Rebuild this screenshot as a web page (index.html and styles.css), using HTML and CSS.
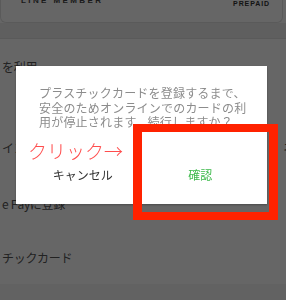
FILE: index.html
```html
<!DOCTYPE html>
<html lang="ja">
<head>
<meta charset="utf-8">
<title>カード登録確認</title>
<link rel="stylesheet" href="styles.css">
</head>
<body>
<div class="screen">
  <div class="card">
    <span class="member">LINE MEMBER</span>
    <span class="prepaid">PREPAID</span>
  </div>
  <div class="band"></div>
  <div class="row r1"><span class="label">を利用</span></div>
  <div class="row r2"><span class="label">イン</span><span class="edge">ネ</span></div>
  <div class="row r3"><span class="label">e Payに登録</span></div>
  <div class="row r4"><span class="label">チックカード</span></div>
  <div class="footer"></div>
</div>
<div class="overlay"></div>
<div class="dialog">
  <p class="msg">プラスチックカードを登録するまで、<br>安全のためオンラインでのカードの利<br>用が停止されます。続行しますか？</p>
  <div class="actions">
    <button class="btn cancel">キャンセル</button>
    <button class="btn ok">確認</button>
  </div>
  <span class="note">クリック→</span>
</div>
<div class="highlight"></div>
</body>
</html>
```
FILE: styles.css
```css
html, body {
  margin: 0;
  padding: 0;
}
body {
  width: 286px;
  height: 300px;
  overflow: hidden;
  background: #fff;
  font-family: "Noto Sans CJK JP", "Noto Sans", sans-serif;
}
.screen {
  height: 300px;
  display: flex;
  flex-direction: column;
}
.card {
  flex: none;
  height: 23px;
  margin-right: 3px;
  box-sizing: border-box;
  border: 1px solid #e2e2e2;
  border-top: 0;
  border-radius: 0 0 6px 6px;
  background: #fff;
  display: flex;
  justify-content: space-between;
  align-items: flex-start;
  padding: 0 12px 0 20px;
}
.member {
  font: bold 8px "Liberation Sans", sans-serif;
  letter-spacing: 2.4px;
  margin-top: -4px;
  color: #444;
}
.prepaid {
  font: 900 7px "Liberation Sans", sans-serif;
  letter-spacing: 0.9px;
  margin-top: 0;
  color: #333;
}
.band {
  flex: none;
  height: 15px;
  background: #eee;
  border-bottom: 1px solid #e0e0e0;
}
.row {
  flex: none;
  display: flex;
  justify-content: space-between;
  align-items: center;
  padding-left: 2px;
  font-size: 12px;
  letter-spacing: -0.3px;
  color: #555;
}
.r1 { height: 54px; }
.r2 { height: 83px; align-items: flex-start; padding-top: 46px; box-sizing: border-box; }
.r3 { height: 54px; }
.r4 { height: 54px; }
.edge { margin-right: -9px; }
.footer {
  flex: 1;
  background: #f5f5f5;
}
.overlay {
  position: fixed;
  inset: 0;
  background: rgba(0, 0, 0, 0.6);
}
.dialog {
  position: fixed;
  left: 16px;
  top: 66px;
  width: 251px;
  height: 138px;
  background: #fff;
  box-shadow: 0 1px 2px rgba(0, 0, 0, 0.3);
  display: flex;
  flex-direction: column;
}
.msg {
  margin: 0;
  padding: 20px 0 0 23px;
  font-size: 12px;
  line-height: 14.5px;
  letter-spacing: 0.2px;
  color: #8c8c8c;
  white-space: nowrap;
}
.actions {
  flex: 1;
  display: flex;
  margin-top: 15px;
  padding: 0 8px;
}
.btn {
  flex: 1;
  border: 0;
  background: none;
  padding: 0;
  font-family: inherit;
  font-size: 12px;
  display: flex;
  align-items: center;
  justify-content: center;
}
.cancel { color: #333; }
.ok { color: #3cb94a; }
.note {
  position: absolute;
  left: 12px;
  top: 75px;
  font-size: 19px;
  font-weight: 300;
  line-height: 19px;
  color: #ff4d4d;
  white-space: nowrap;
}
.highlight {
  position: fixed;
  left: 133px;
  top: 124px;
  width: 145px;
  height: 96px;
  box-sizing: border-box;
  border-style: solid;
  border-color: #ff2200;
  border-width: 8px 9px;
}
```
